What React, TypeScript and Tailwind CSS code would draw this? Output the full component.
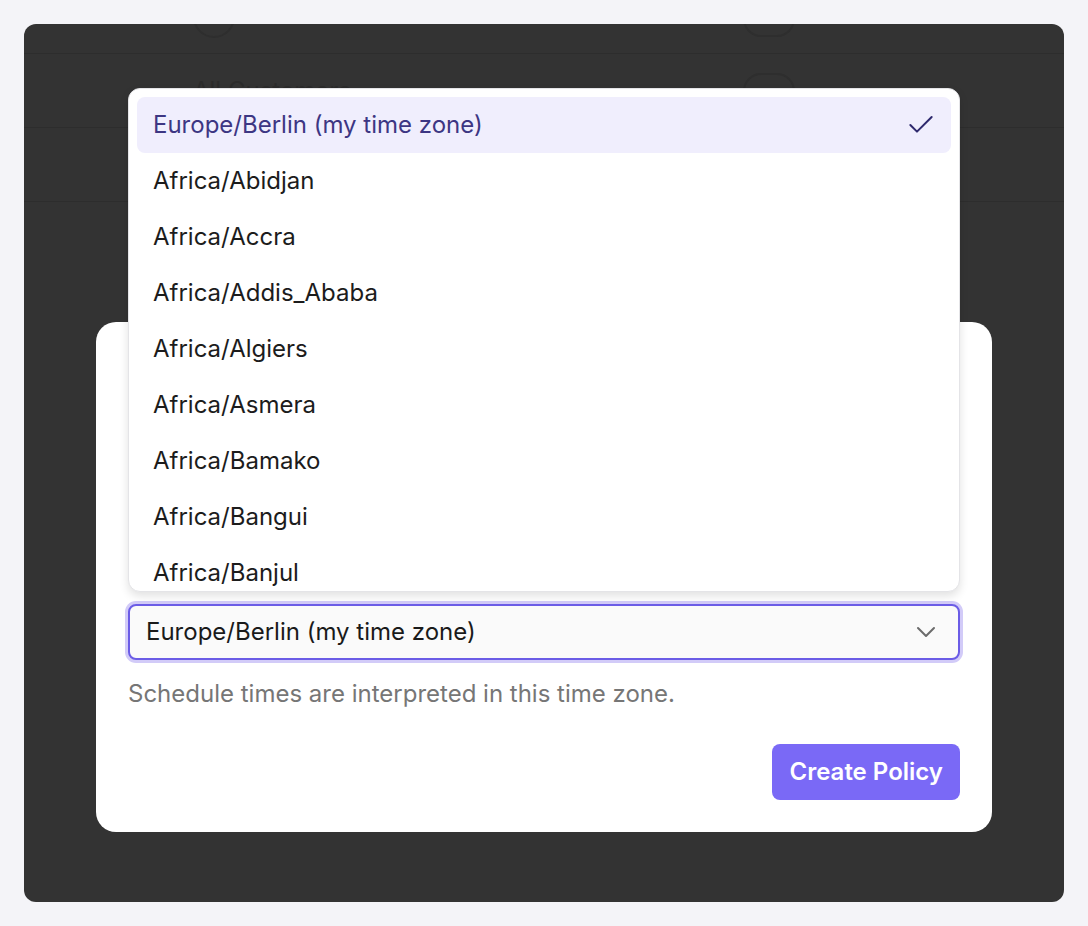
import { Check, ChevronDown } from "lucide-react";

const ZONES = [
  "Africa/Abidjan",
  "Africa/Accra",
  "Africa/Addis_Ababa",
  "Africa/Algiers",
  "Africa/Asmera",
  "Africa/Bamako",
  "Africa/Bangui",
  "Africa/Banjul",
];

const SELECTED = "Europe/Berlin (my time zone)";

function BackgroundRows() {
  return (
    <div className="-mt-[44px]">
      {/* avatar row */}
      <div className="flex h-[74px] items-center border-b border-[#2d2d2d] pl-[169px]">
        <div className="w-[550px]">
          <div className="h-[42px] w-[42px] rounded-full border-2 border-[#2e2e2e]" />
        </div>
        <div className="mt-1 h-[36px] w-[52px] rounded-full border-2 border-[#2e2e2e]" />
      </div>
      <div className="flex h-[74px] items-center border-b border-[#2d2d2d] pl-[169px]">
        <div className="w-[550px] text-[24px] text-[#2b2b2b]">All Customers</div>
        <div className="h-[36px] w-[52px] rounded-full border-2 border-[#2e2e2e]" />
      </div>
      <div className="flex h-[74px] items-center border-b border-[#2d2d2d] pl-[169px]" />
    </div>
  );
}

function ZoneMenu() {
  return (
    <div className="absolute bottom-[calc(100%+12px)] left-0 right-0 h-[504px] overflow-hidden rounded-xl border border-[#e4e4e7] bg-white p-2 shadow-[0_4px_10px_rgba(0,0,0,0.12)]">
      <div className="flex h-14 items-center justify-between rounded-lg bg-[#f0eefd] pl-4 pr-[14px] text-[24px] text-[#3d3683]">
        <span>{SELECTED}</span>
        <Check size={32} strokeWidth={1.5} className="text-[#2f2a6e]" />
      </div>
      {ZONES.map((z) => (
        <div key={z} className="flex h-14 items-center pl-4 text-[24px] text-[#1c1c1c]">
          {z}
        </div>
      ))}
    </div>
  );
}

export default function App() {
  return (
    <div
      className="min-h-screen bg-[#f4f4f8] p-6"
      style={{ fontFamily: "Inter, 'Noto Sans', sans-serif" }}
    >
      <div className="relative h-[878px] overflow-hidden rounded-xl bg-[#333333]">
        <BackgroundRows />

        <div className="absolute inset-0 flex justify-center pt-[298px]">
          <div className="h-[510px] w-[896px] rounded-[20px] bg-white p-8">
            <div className="h-[250px]" />

            <div className="relative">
              <ZoneMenu />
              <div className="flex h-14 items-center justify-between rounded-lg border-2 border-[#6b5ce6] bg-[#fafafa] pl-4 pr-[16px] text-[24px] text-[#1a1a1a] shadow-[0_0_0_3px_#d2cbf8]">
                <span>{SELECTED}</span>
                <ChevronDown size={32} strokeWidth={1.5} className="text-[#6b6b6b]" />
              </div>
            </div>

            <p className="mt-5 text-[24px] leading-7 text-[#767676]">
              Schedule times are interpreted in this time zone.
            </p>

            <div className="mt-9 flex justify-end">
              <button className="h-14 rounded-lg bg-[#7a69f6] px-[17px] text-[24px] font-semibold text-white">
                Create Policy
              </button>
            </div>
          </div>
        </div>
      </div>
    </div>
  );
}
